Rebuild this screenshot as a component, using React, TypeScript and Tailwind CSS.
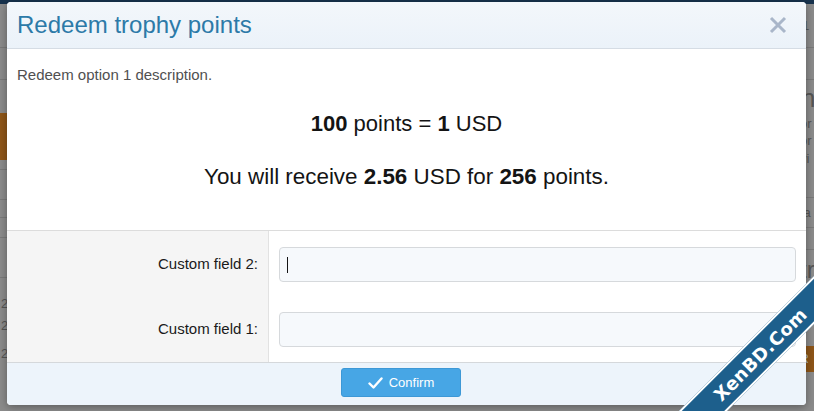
import React from "react";

function CloseIcon() {
  return (
    <svg width="18" height="18" viewBox="0 0 18 18" fill="none">
      <path d="M2 2 L16 16 M16 2 L2 16" stroke="#a9b6c9" strokeWidth="3" strokeLinecap="butt" />
    </svg>
  );
}

function CheckIcon() {
  return (
    <svg width="15" height="12" viewBox="0 0 15 12" fill="none">
      <path d="M1.5 6.5 L5.5 10.5 L13.5 1.5" stroke="#ffffff" strokeWidth="2.4" strokeLinecap="round" strokeLinejoin="round" />
    </svg>
  );
}

export default function App() {
  const font = { fontFamily: '"Liberation Sans", Arial, sans-serif' };
  return (
    <div className="relative w-[814px] h-[411px] overflow-hidden bg-[#8b8b8b]" style={font}>
      {/* background page (dimmed) */}
      <div className="h-[4px] bg-[#17324d]" />
      <div className="flex justify-between h-[407px]">
        <div className="w-[20px] flex flex-col">
          <div className="h-[44px] border-b border-[#7a7a7a]" />
          <div className="h-[32px] border-b border-[#7a7a7a]" />
          <div className="h-[33px]" />
          <div className="h-[47px] bg-[#8e5618]" />
          <div className="h-[10px] border-b border-[#7a7a7a]" />
          <div className="h-[30px] border-b border-[#7a7a7a]" />
          <div className="h-[18px] border-b border-[#7a7a7a]" />
          <div className="h-[20px] border-b border-[#7a7a7a]" />
          <div className="h-[40px] border-b border-[#7a7a7a]" />
          <div className="h-[35px] flex items-end text-[13px] text-[#555] pl-[1px]">2</div>
          <div className="h-[22px] flex items-end text-[13px] text-[#555] pl-[1px]">22</div>
          <div className="h-[28px] flex items-end text-[13px] text-[#555] pl-[1px]">20</div>
        </div>
        <div className="w-[14px] flex flex-col text-[#555] overflow-hidden">
          <div className="h-[44px] border-b border-[#7a7a7a] flex items-center pl-[2px] text-[13px]">1</div>
          <div className="h-[32px] border-b border-[#7a7a7a]" />
          <div className="h-[36px] flex items-center text-[26px] leading-none pl-[1px]">n</div>
          <div className="h-[16px] text-[13px] leading-[16px]">or</div>
          <div className="h-[18px] text-[13px] leading-[18px]">or</div>
          <div className="h-[18px] text-[13px] leading-[18px]">vi</div>
          <div className="h-[30px] border-b border-[#7a7a7a]" />
          <div className="h-[30px] border-b border-[#7a7a7a] flex items-center text-[13px]">ta</div>
          <div className="h-[22px] border-b border-[#7a7a7a]" />
          <div className="h-[40px] border-b border-[#7a7a7a] flex items-center text-[24px]">tr</div>
          <div className="h-[56px]" />
          <div className="h-[26px] bg-[#8e5618] text-[12px] text-[#bbb] flex items-center">R</div>
        </div>
      </div>

      {/* modal */}
      <div className="absolute left-[7px] top-[2px] w-[799px] h-[403px] rounded-[4px] bg-white flex flex-col overflow-hidden shadow-[0_2px_8px_rgba(0,0,0,0.35)]">
        <div className="h-[47px] shrink-0 flex items-center justify-between pl-[10px] pr-[19px] bg-gradient-to-b from-[#f3f7fb] to-[#ebf2f9] border-b border-[#d5dce4]">
          <div className="text-[24px] text-[#2c7aa8] leading-none">Redeem trophy points</div>
          <CloseIcon />
        </div>
        <div className="h-[182px] shrink-0 px-[10px] pt-[17px] border-b border-[#dcdcdc]">
          <div className="text-[15px] text-[#505050] leading-[18px]">Redeem option 1 description.</div>
          <div className="mt-[27px] text-center text-[22px] text-[#141414] leading-[26px]">
            <b>100</b> points = <b>1</b> USD
          </div>
          <div className="mt-[27px] text-center text-[22.4px] text-[#141414] leading-[26px]">
            You will receive <b>2.56</b> USD for <b>256</b> points.
          </div>
        </div>
        <div className="flex-1 flex">
          <div className="w-[262px] shrink-0 bg-[#f5f5f5] border-r border-[#e2e2e2] flex flex-col items-end pr-[10px] pt-[16px] text-[15px] text-[#1a1a1a]">
            <div className="h-[35px] flex items-center">Custom field 2:</div>
            <div className="h-[35px] mt-[30px] flex items-center">Custom field 1:</div>
          </div>
          <div className="flex-1 flex flex-col pl-[10px] pr-[10px] pt-[16px]">
            <div className="h-[35px] rounded-[4px] border border-[#d6d9dc] bg-[#f6f9fc] flex items-center pl-[7px]">
              <div className="w-[1px] h-[16px] bg-[#141414]" />
            </div>
            <div className="h-[35px] mt-[30px] rounded-[4px] border border-[#d6d9dc] bg-[#f6f9fc]" />
          </div>
        </div>
        <div className="h-[43px] shrink-0 border-t border-[#d5d8db] bg-[#edf4fb] flex justify-center pt-[5px] pr-[11px]">
          <div className="w-[120px] h-[29px] rounded-[3px] bg-[#47a6e5] border border-[#3d98d6] flex items-center justify-center gap-[6px] text-[13px] text-white">
            <CheckIcon />
            <span>Confirm</span>
          </div>
        </div>
      </div>

      {/* watermark ribbon */}
      <div className="absolute left-[610px] top-[337px] w-[300px] h-[34px] -rotate-45 bg-[#1d5f8c] border-y-[2px] border-white flex items-center justify-center">
        <span className="text-white font-bold text-[18px] tracking-[0.5px]" style={{ fontFamily: '"DejaVu Sans", sans-serif' }}>XenBD.Com</span>
      </div>
    </div>
  );
}
